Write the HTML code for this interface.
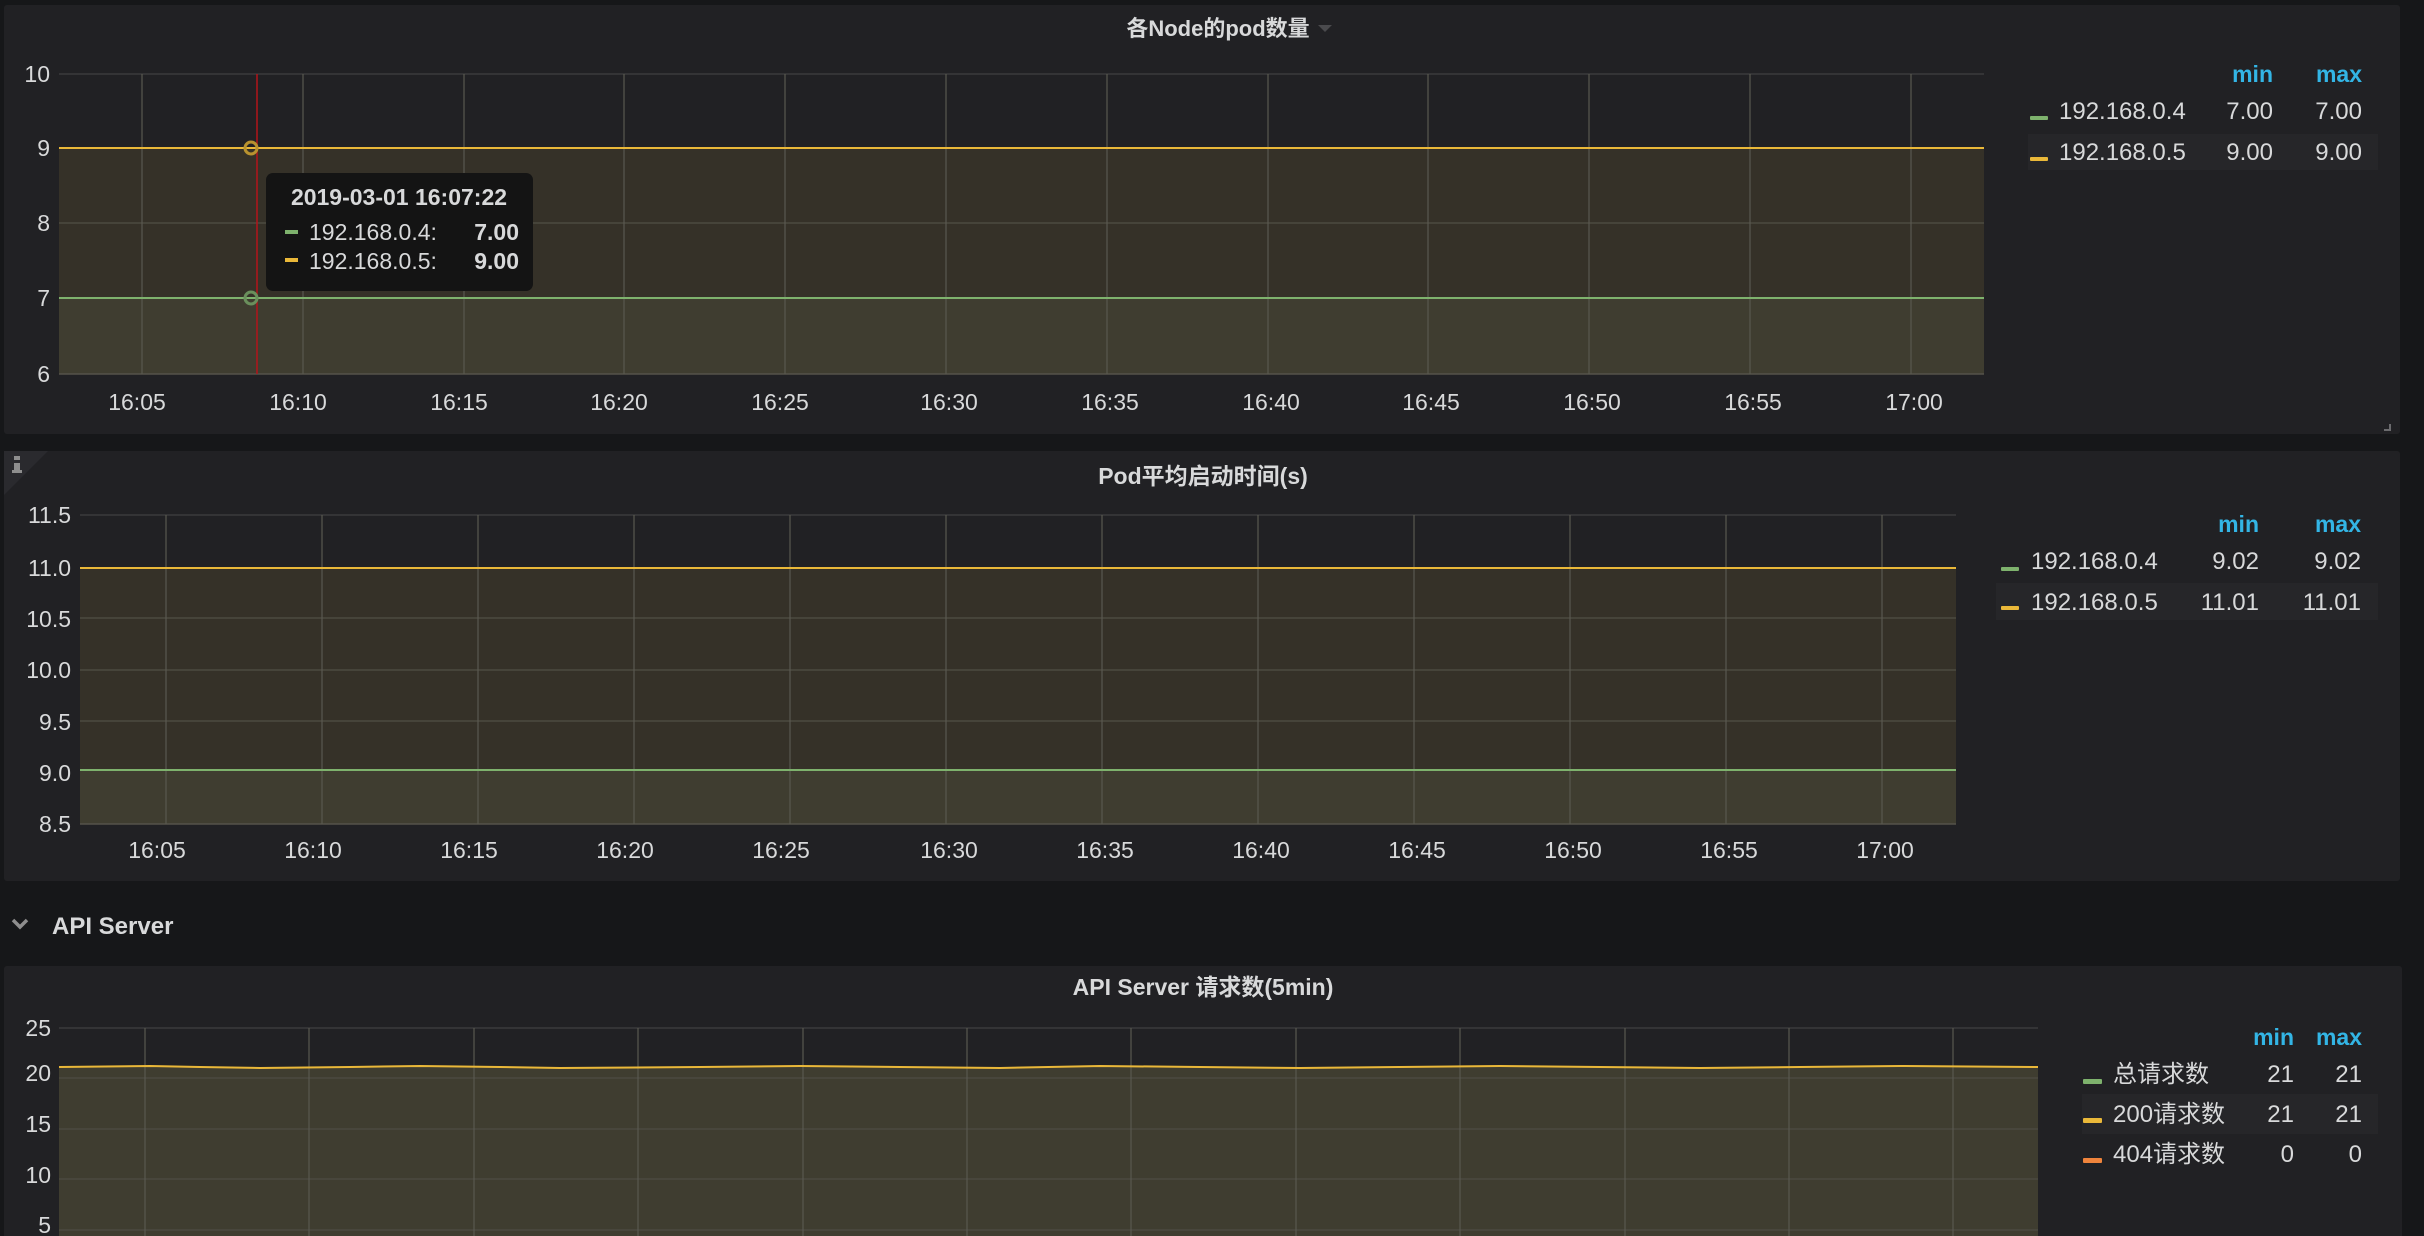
<!DOCTYPE html>
<html><head><meta charset="utf-8">
<style>
html,body{margin:0;padding:0;background:#161719;}
body{width:2424px;height:1236px;overflow:hidden;position:relative;}
svg text{font-family:"Liberation Sans","Noto Sans CJK SC",sans-serif;}
</style></head>
<body>
<svg width="2424" height="1236" viewBox="0 0 2424 1236" xmlns="http://www.w3.org/2000/svg" style="position:absolute;left:0;top:0">
<rect width="2424" height="1236" fill="#161719"/>
<!-- Panel 1 -->
<rect x="4" y="5" width="2396" height="429" rx="3" fill="#212124"/>
<text x="1218" y="36" fill="#d8d9da" font-size="22" font-weight="bold" text-anchor="middle">各Node的pod数量</text>
<polygon points="1318,25 1332,25 1325,32" fill="#4a4a4d"/>
<rect x="59" y="148" width="1925" height="150" fill="#353128"/>
<rect x="59" y="298" width="1925" height="76" fill="#3f3d30"/>
<g stroke-width="1.5">
<line x1="59" y1="74" x2="1984" y2="74" stroke="#3a3a3c"/>
<line x1="59" y1="223" x2="1984" y2="223" stroke="#4c4a40"/>
<line x1="59" y1="374" x2="1984" y2="374" stroke="#55534a"/>
</g>
<g stroke="#5a5950" stroke-width="1.5" opacity="0.8">
<line x1="142" y1="74" x2="142" y2="374"/><line x1="303" y1="74" x2="303" y2="374"/><line x1="464" y1="74" x2="464" y2="374"/><line x1="624" y1="74" x2="624" y2="374"/><line x1="785" y1="74" x2="785" y2="374"/><line x1="946" y1="74" x2="946" y2="374"/><line x1="1107" y1="74" x2="1107" y2="374"/><line x1="1268" y1="74" x2="1268" y2="374"/><line x1="1428" y1="74" x2="1428" y2="374"/><line x1="1589" y1="74" x2="1589" y2="374"/><line x1="1750" y1="74" x2="1750" y2="374"/><line x1="1911" y1="74" x2="1911" y2="374"/>
</g>
<line x1="59" y1="148" x2="1984" y2="148" stroke="#eab839" stroke-width="2"/>
<line x1="59" y1="298" x2="1984" y2="298" stroke="#7eb26d" stroke-width="2"/>
<line x1="257" y1="74" x2="257" y2="374" stroke="#b3141a" stroke-width="1.5"/>
<circle cx="251" cy="148" r="6" fill="none" stroke="#b8922f" stroke-width="3"/>
<circle cx="251" cy="298" r="6" fill="none" stroke="#6a8f5c" stroke-width="3"/>
<g fill="#d8d9da" font-size="23" text-anchor="end">
<text x="50" y="82">10</text><text x="50" y="156">9</text><text x="50" y="231">8</text><text x="50" y="306">7</text><text x="50" y="382">6</text>
</g>
<g fill="#d8d9da" font-size="23" text-anchor="middle">
<text x="137" y="410">16:05</text><text x="298" y="410">16:10</text><text x="459" y="410">16:15</text><text x="619" y="410">16:20</text><text x="780" y="410">16:25</text><text x="949" y="410">16:30</text><text x="1110" y="410">16:35</text><text x="1271" y="410">16:40</text><text x="1431" y="410">16:45</text><text x="1592" y="410">16:50</text><text x="1753" y="410">16:55</text><text x="1914" y="410">17:00</text>
</g>
<!-- tooltip -->
<rect x="266" y="173" width="267" height="118" rx="7" fill="#141414"/>
<text x="399" y="205" fill="#d8d9da" font-size="23" font-weight="bold" text-anchor="middle">2019-03-01 16:07:22</text>
<rect x="285" y="230" width="13" height="4" fill="#7eb26d"/>
<rect x="285" y="258" width="13" height="4" fill="#eab839"/>
<text x="309" y="240" fill="#d8d9da" font-size="23">192.168.0.4:</text>
<text x="309" y="269" fill="#d8d9da" font-size="23">192.168.0.5:</text>
<text x="519" y="240" fill="#d8d9da" font-size="23" font-weight="bold" text-anchor="end">7.00</text>
<text x="519" y="269" fill="#d8d9da" font-size="23" font-weight="bold" text-anchor="end">9.00</text>
<!-- legend1 -->
<rect x="2028" y="134" width="350" height="36" fill="#262629"/>
<g font-size="23" font-weight="bold" fill="#33b5e5" text-anchor="end"><text x="2273" y="82">min</text><text x="2362" y="82">max</text></g>
<rect x="2030" y="116" width="18" height="4" rx="1" fill="#7eb26d"/>
<rect x="2030" y="157" width="18" height="4" rx="1" fill="#eab839"/>
<g font-size="24" fill="#d8d9da"><text x="2059" y="119">192.168.0.4</text><text x="2059" y="160">192.168.0.5</text></g>
<g font-size="24" fill="#d8d9da" text-anchor="end"><text x="2273" y="119">7.00</text><text x="2362" y="119">7.00</text><text x="2273" y="160">9.00</text><text x="2362" y="160">9.00</text></g>
<path d="M2390 424 V430 H2384" fill="none" stroke="#6b6b6e" stroke-width="2"/>

<!-- Panel 2 -->
<rect x="4" y="451" width="2396" height="430" rx="3" fill="#212124"/>
<polygon points="4,451 48,451 4,495" fill="#2a2a2e"/>
<rect x="14" y="456" width="6" height="4" fill="#8e8e8e"/>
<rect x="14" y="463" width="6" height="10" fill="#8e8e8e"/>
<rect x="12" y="470" width="10" height="3" fill="#8e8e8e"/>
<text x="1203" y="484" fill="#d8d9da" font-size="23" font-weight="bold" text-anchor="middle">Pod平均启动时间(s)</text>
<rect x="80" y="568" width="1876" height="202" fill="#353128"/>
<rect x="80" y="770" width="1876" height="54" fill="#3f3d30"/>
<g stroke-width="1.5">
<line x1="80" y1="515" x2="1956" y2="515" stroke="#3a3a3c"/>
<line x1="80" y1="618" x2="1956" y2="618" stroke="#4c4a40"/><line x1="80" y1="670" x2="1956" y2="670" stroke="#4c4a40"/><line x1="80" y1="721" x2="1956" y2="721" stroke="#4c4a40"/>
<line x1="80" y1="824" x2="1956" y2="824" stroke="#55534a"/>
</g>
<g stroke="#5a5950" stroke-width="1.5" opacity="0.8">
<line x1="166" y1="515" x2="166" y2="824"/><line x1="322" y1="515" x2="322" y2="824"/><line x1="478" y1="515" x2="478" y2="824"/><line x1="634" y1="515" x2="634" y2="824"/><line x1="790" y1="515" x2="790" y2="824"/><line x1="946" y1="515" x2="946" y2="824"/><line x1="1102" y1="515" x2="1102" y2="824"/><line x1="1258" y1="515" x2="1258" y2="824"/><line x1="1414" y1="515" x2="1414" y2="824"/><line x1="1570" y1="515" x2="1570" y2="824"/><line x1="1726" y1="515" x2="1726" y2="824"/><line x1="1882" y1="515" x2="1882" y2="824"/>
</g>
<line x1="80" y1="568" x2="1956" y2="568" stroke="#eab839" stroke-width="2"/>
<line x1="80" y1="770" x2="1956" y2="770" stroke="#7eb26d" stroke-width="2"/>
<g fill="#d8d9da" font-size="23" text-anchor="end">
<text x="71" y="523">11.5</text><text x="71" y="576">11.0</text><text x="71" y="627">10.5</text><text x="71" y="678">10.0</text><text x="71" y="730">9.5</text><text x="71" y="781">9.0</text><text x="71" y="832">8.5</text>
</g>
<g fill="#d8d9da" font-size="23" text-anchor="middle">
<text x="157" y="858">16:05</text><text x="313" y="858">16:10</text><text x="469" y="858">16:15</text><text x="625" y="858">16:20</text><text x="781" y="858">16:25</text><text x="949" y="858">16:30</text><text x="1105" y="858">16:35</text><text x="1261" y="858">16:40</text><text x="1417" y="858">16:45</text><text x="1573" y="858">16:50</text><text x="1729" y="858">16:55</text><text x="1885" y="858">17:00</text>
</g>
<rect x="1996" y="583" width="382" height="37" fill="#262629"/>
<g font-size="23" font-weight="bold" fill="#33b5e5" text-anchor="end"><text x="2259" y="532">min</text><text x="2361" y="532">max</text></g>
<rect x="2001" y="567" width="18" height="4" rx="1" fill="#7eb26d"/>
<rect x="2001" y="606" width="18" height="4" rx="1" fill="#eab839"/>
<g font-size="24" fill="#d8d9da"><text x="2031" y="569">192.168.0.4</text><text x="2031" y="610">192.168.0.5</text></g>
<g font-size="24" fill="#d8d9da" text-anchor="end"><text x="2259" y="569">9.02</text><text x="2361" y="569">9.02</text><text x="2259" y="610">11.01</text><text x="2361" y="610">11.01</text></g>

<!-- Section header -->
<path d="M13 920 L20 927 L27 920" fill="none" stroke="#8e8e8e" stroke-width="3.5"/>
<text x="52" y="934" fill="#d8d9da" font-size="24" font-weight="bold">API Server</text>

<!-- Panel 3 -->
<rect x="4" y="966" width="2398" height="280" rx="3" fill="#212124"/>
<text x="1203" y="995" fill="#d8d9da" font-size="23" font-weight="bold" text-anchor="middle">API Server 请求数(5min)</text>
<path d="M59 1067 L150 1066 L200 1067 L260 1068 L350 1067 L420 1066 L500 1067 L560 1068 L700 1067 L800 1066 L900 1067 L1000 1068 L1100 1066 L1200 1067 L1300 1068 L1400 1067 L1500 1066 L1600 1067 L1700 1068 L1800 1067 L1900 1066 L2038 1067 V1236 H59 Z" fill="#3f3d30"/>
<g stroke-width="1.5">
<line x1="59" y1="1028" x2="2038" y2="1028" stroke="#3a3a3c"/>
<line x1="59" y1="1078" x2="2038" y2="1078" stroke="#4c4a40"/><line x1="59" y1="1129" x2="2038" y2="1129" stroke="#4c4a40"/><line x1="59" y1="1179" x2="2038" y2="1179" stroke="#4c4a40"/><line x1="59" y1="1230" x2="2038" y2="1230" stroke="#4c4a40"/>
</g>
<g stroke="#5a5950" stroke-width="1.5" opacity="0.8">
<line x1="145" y1="1028" x2="145" y2="1236"/><line x1="309" y1="1028" x2="309" y2="1236"/><line x1="474" y1="1028" x2="474" y2="1236"/><line x1="638" y1="1028" x2="638" y2="1236"/><line x1="803" y1="1028" x2="803" y2="1236"/><line x1="967" y1="1028" x2="967" y2="1236"/><line x1="1131" y1="1028" x2="1131" y2="1236"/><line x1="1296" y1="1028" x2="1296" y2="1236"/><line x1="1460" y1="1028" x2="1460" y2="1236"/><line x1="1625" y1="1028" x2="1625" y2="1236"/><line x1="1789" y1="1028" x2="1789" y2="1236"/><line x1="1953" y1="1028" x2="1953" y2="1236"/>
</g>
<path d="M59 1067 L150 1066 L200 1067 L260 1068 L350 1067 L420 1066 L500 1067 L560 1068 L700 1067 L800 1066 L900 1067 L1000 1068 L1100 1066 L1200 1067 L1300 1068 L1400 1067 L1500 1066 L1600 1067 L1700 1068 L1800 1067 L1900 1066 L2038 1067" fill="none" stroke="#eab839" stroke-width="2"/>
<g fill="#d8d9da" font-size="23" text-anchor="end">
<text x="51" y="1036">25</text><text x="51" y="1081">20</text><text x="51" y="1132">15</text><text x="51" y="1183">10</text><text x="51" y="1233">5</text>
</g>
<rect x="2082" y="1094" width="296" height="40" fill="#262629"/>
<g font-size="23" font-weight="bold" fill="#33b5e5" text-anchor="end"><text x="2294" y="1045">min</text><text x="2362" y="1045">max</text></g>
<rect x="2083" y="1079" width="19" height="5" rx="1" fill="#7eb26d"/>
<rect x="2083" y="1118" width="19" height="5" rx="1" fill="#eab839"/>
<rect x="2083" y="1158" width="19" height="5" rx="1" fill="#ef843c"/>
<g font-size="24" fill="#d8d9da"><text x="2113" y="1082">总请求数</text><text x="2113" y="1122">200请求数</text><text x="2113" y="1162">404请求数</text></g>
<g font-size="24" fill="#d8d9da" text-anchor="end"><text x="2294" y="1082">21</text><text x="2362" y="1082">21</text><text x="2294" y="1122">21</text><text x="2362" y="1122">21</text><text x="2294" y="1162">0</text><text x="2362" y="1162">0</text></g>
</svg>
</body></html>
